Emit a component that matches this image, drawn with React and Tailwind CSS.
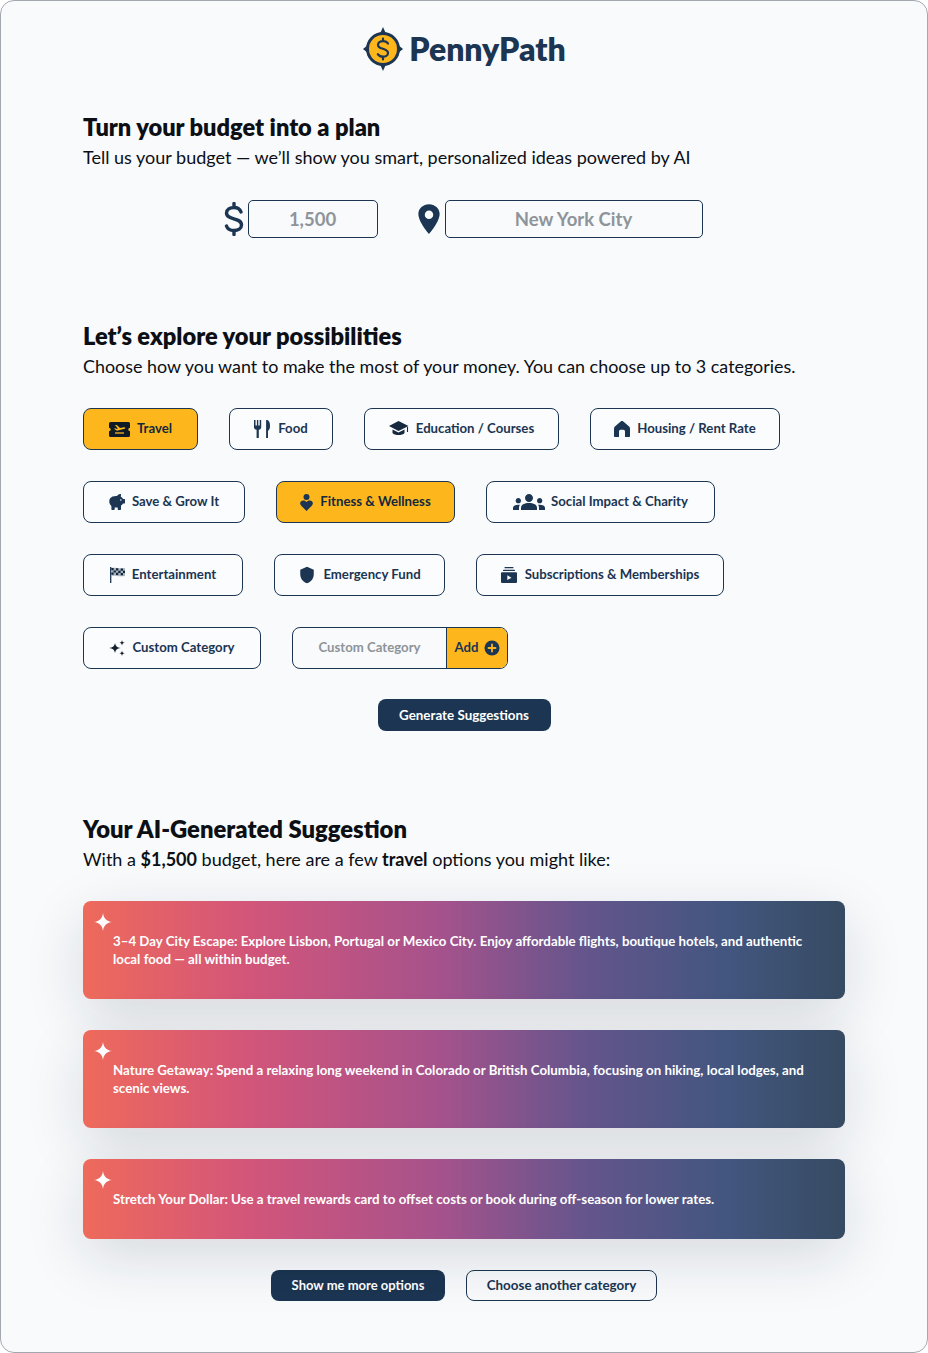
import React from "react";
import { MdGroups, MdShield } from "react-icons/md";
import { IoLocationSharp } from "react-icons/io5";

const NAVY = "#1b3552";

const Logo = () => (
  <svg width="42" height="44" viewBox="0 0 42 44">
    <path d="M21 0 L25 9 L41 22 L25 35 L21 44 L17 35 L1 22 L17 9 Z" fill={NAVY} />
    <circle cx="21" cy="22" r="17" fill={NAVY} />
    <circle cx="21" cy="22" r="14" fill="#fdb71c" />
    <path d="M26 16.500c-1-1.600-2.800-2.400-5-2.400-2.800 0-5 1.500-5 3.800 0 5 10 2.800 10 8 0 2.300-2.200 3.800-5 3.800-2.300 0-4.200-.9-5.200-2.600M21 11.500v2.600M21 29.900v2.600" fill="none" stroke={NAVY} strokeWidth="2.200" strokeLinecap="round" />
  </svg>
);

const Ticket = () => (
  <svg width="21" height="15" viewBox="0 0 21 15">
    <path d="M1.500 0h18A1.500 1.500 0 0 1 21 1.500v4.300a1.700 1.700 0 0 0 0 3.400v4.300a1.500 1.500 0 0 1-1.500 1.500h-18A1.500 1.500 0 0 1 0 13.500V9.200a1.700 1.700 0 0 0 0-3.400V1.500A1.500 1.500 0 0 1 1.500 0Z" fill="#0e1a26" />
    <path d="M6 3 L7.800 3 L11 6 L15 5.200 C16.500 5 16.800 6.400 15.500 6.800 L8 8.800 L5 6.800 L6.300 6.300 L7.700 7 L8.800 6.600 Z" fill="#fdb71c" />
    <path d="M6 11h9" stroke="#fdb71c" strokeWidth="1.300" />
  </svg>
);

const Food = () => (
  <svg width="17" height="18" viewBox="0 0 17 18" fill={NAVY}>
    <path d="M0 0h1.500v5.500h1.400V0h1.400v5.500h1.400V0h1.500v7c0 1.600-1 2.500-2.400 2.800V18H2.600V9.800C1 9.500 0 8.600 0 7Z" />
    <path d="M12.500 0C15 0 16 2.500 16 6c0 2.500-.7 4-2 4.700V18h-1.900V0Z" />
  </svg>
);

const Cap = () => (
  <svg width="20" height="16" viewBox="0 0 20 16" fill="#16293f">
    <path d="M9.500 0 L19.500 5 L9.500 10 L0 5 Z" />
    <path d="M3.500 8.500 L9.500 11.500 L15.500 8.500 V12 C13.500 14.800 5.500 14.800 3.500 12 Z" />
    <path d="M18.500 6v5" stroke="#16293f" strokeWidth="1.100" />
  </svg>
);

const House = () => (
  <svg width="16" height="16" viewBox="0 0 16 16" fill={NAVY}>
    <path fillRule="evenodd" d="M8 0 C9 0 9.500 .6 10.500 1.500 L14.500 5 C15.500 5.800 16 6.700 16 8 V15 C16 15.600 15.600 16 15 16 H11 V10.500 C11 9.500 10.300 8.800 9.500 8.800 H6.500 C5.700 8.800 5 9.500 5 10.500 V16 H1 C.4 16 0 15.600 0 15 V8 C0 6.700 .5 5.800 1.500 5 L5.500 1.500 C6.500 .6 7 0 8 0 Z" />
  </svg>
);

const Piggy = () => (
  <svg width="16" height="16" viewBox="0 0 16 16" fill={NAVY}>
    <path d="M1 4.500 C2.500 2.500 5 1.800 8 2 C9 .5 10.500 0 12 0 L11.800 2.700 C13 3.400 13.700 4.200 14 5 H15.500 C15.800 5 16 5.200 16 5.500 V9 C16 9.300 15.800 9.500 15.500 9.500 H14 C13.500 10.500 12.800 11 12 11.600 V15 C12 15.500 11.700 16 11 16 H9.500 C9 16 8.700 15.500 8.700 15 V13.500 H5.700 V15 C5.700 15.500 5.400 16 4.800 16 H3.200 C2.700 16 2.400 15.500 2.400 15 V12 C.4 10.500 -.4 7 1 4.500 Z" />
    <circle cx="11.800" cy="6" r=".8" fill="#fafcfe" />
  </svg>
);

const Heart = () => (
  <svg width="13" height="17" viewBox="0 0 13 17" fill={NAVY}>
    <circle cx="6.500" cy="3" r="3" />
    <path d="M6.500 17 L1 11.500 C-1 9 .8 6.500 3.300 6.500 C4.700 6.500 5.800 7.200 6.500 8 C7.200 7.200 8.300 6.500 9.700 6.500 C12.200 6.500 14 9 12 11.500 Z" />
  </svg>
);

const Flag = () => (
  <svg width="15" height="16" viewBox="0 0 15 16">
    <path d="M.7 0v16" stroke={NAVY} strokeWidth="1.300" />
    <path d="M1.300 1 C5 .2 9 2 15 1 V9 C9 10 5 8.200 1.300 9 Z" fill="#a9b4c0" />
    <path d="M1.300 1h2.300v2.300H1.300ZM6 1.300h2.300v2.300H6ZM10.700 1.500H13v2.200h-2.300ZM3.600 3.400h2.300v2.200H3.600ZM8.300 3.700h2.300v2.200H8.300ZM13 3.700h2v2.200h-2ZM1.300 5.600h2.300v2.200H1.300ZM6 5.800h2.300V8H6ZM10.700 6h2.300v2.200h-2.300Z" fill="#13263a" />
  </svg>
);

const Subs = () => (
  <svg width="16" height="16" viewBox="0 0 16 16" fill={NAVY}>
    <rect x="3.500" y="0" width="9" height="1.300" rx=".5" />
    <rect x="2" y="2.700" width="12" height="1.300" rx=".5" />
    <path fillRule="evenodd" d="M1 5.300h14a1 1 0 0 1 1 1V15a1 1 0 0 1-1 1H1a1 1 0 0 1-1-1V6.300a1 1 0 0 1 1-1Z M6.300 8.300v4.800l4.200-2.400Z" />
  </svg>
);

const Stars = () => (
  <svg width="16" height="16" viewBox="0 0 16 16" fill="#16202d">
    <path d="M6 3 C6.500 6 8 7.500 11.500 8 C8 8.500 6.500 10 6 13 C5.500 10 4 8.500 0 8 C4 7.500 5.500 6 6 3 Z" />
    <path d="M13 0 C13.200 1.700 14 2.600 16 2.800 C14 3 13.200 3.900 13 5.600 C12.800 3.900 12 3 10.200 2.800 C12 2.600 12.800 1.700 13 0 Z" />
    <path d="M13 10.400 C13.200 12.100 14 13 16 13.200 C14 13.400 13.200 14.300 13 16 C12.800 14.300 12 13.400 10.200 13.200 C12 13 12.800 12.100 13 10.400 Z" />
  </svg>
);

const PlusCircle = () => (
  <svg width="16" height="16" viewBox="0 0 16 16">
    <circle cx="8" cy="8" r="7.500" fill={NAVY} />
    <path d="M8 4.500v7M4.500 8h7" stroke="#fdb71c" strokeWidth="1.800" strokeLinecap="round" />
  </svg>
);

const Sparkle = () => (
  <svg width="18" height="18" viewBox="0 0 18 18" fill="#fff">
    <path d="M9 0 C9.700 5.500 12.500 8.300 18 9 C12.500 9.700 9.700 12.500 9 18 C8.300 12.500 5.500 9.700 0 9 C5.500 8.300 8.300 5.500 9 0 Z" />
  </svg>
);

const Chip = ({ w, icon, active, children, gap = "gap-[7px]" }) => (
  <button
    className={`${w} h-[42px] flex items-center justify-center ${gap} rounded-lg border-[1.5px] border-[#1b3552] text-[13.200px] font-bold ${active ? "bg-[#fdb71c] text-[#14283e]" : "bg-[#fafcfe] text-[#1b3552]"}`}
  >
    {icon}
    <span>{children}</span>
  </button>
);

const Suggestion = ({ h, children }) => (
  <div className={`${h} relative rounded-lg bg-[linear-gradient(90deg,#ee6a5b_0%,#d2557a_22%,#a5528c_47%,#64558c_66%,#435680_84%,#364b62_100%)] pl-[30px] pr-[40px] flex items-center text-[13.300px] leading-[18px] font-bold text-white shadow-[0_18px_60px_rgba(20,30,45,0.14)]`}>
    <span className="absolute left-[11px] top-[12px]"><Sparkle /></span>
    <p>{children}</p>
  </div>
);

export default function App() {
  return (
    <div className="w-[928px] h-[1353px] bg-white font-['Lato','Noto_Sans',sans-serif]">
      <div className="w-full h-full rounded-[14px] border border-[#a3a8b0] bg-[#f8fafc] px-[82px] overflow-hidden">
        <header className="flex justify-center items-center gap-[5px] pt-[25px]">
          <Logo />
          <span className="text-[32px] leading-[46px] font-extrabold text-[#1b3552]">PennyPath</span>
        </header>

        <h1 className="mt-[39px] text-[23.600px] leading-[32px] font-extrabold text-[#0c0f14]">Turn your budget into a plan</h1>
        <p className="mt-[1px] text-[18px] leading-[26px] text-[#0c0f14]">Tell us your budget — we’ll show you smart, personalized ideas powered by AI</p>

        <div className="mt-[30px] flex justify-center items-center pr-[2px]">
          <svg width="20" height="34" viewBox="0 0 20 34" className="mr-[4px]">
            <path d="M17 10c-1-3-3.800-4.500-7-4.500-4 0-7.500 2-7.500 5.500 0 7.500 15 4 15 12 0 3.500-3.500 5.500-7.500 5.500-3.500 0-6.500-1.500-7.500-4.500M10 1.500v4M10 28.500v4" fill="none" stroke={NAVY} strokeWidth="3.400" strokeLinecap="round" />
          </svg>
          <div className="w-[130px] h-[38px] rounded-[5px] border-[1.5px] border-[#1b3552] flex items-center justify-center pt-[1px] text-[18.500px] font-bold text-[#8e9499]">1,500</div>
          <IoLocationSharp className="ml-[34px] -mr-[1px] text-[#1b3552]" size={34} />
          <div className="w-[258px] h-[38px] rounded-[5px] border-[1.5px] border-[#1b3552] flex items-center justify-center pt-[1px] text-[18.500px] font-bold text-[#8e9499]">New York City</div>
        </div>

        <h2 className="mt-[82px] text-[23.600px] leading-[32px] font-extrabold text-[#0c0f14]">Let’s explore your possibilities</h2>
        <p className="mt-[1px] text-[17.900px] leading-[26px] text-[#0c0f14]">Choose how you want to make the most of your money. You can choose up to 3 categories.</p>

        <div className="mt-[29px] flex flex-col gap-[31px]">
          <div className="flex gap-[31px]">
            <Chip w="w-[115px]" active icon={<Ticket />}>Travel</Chip>
            <Chip w="w-[104px]" icon={<Food />}>Food</Chip>
            <Chip w="w-[195px]" icon={<Cap />}>Education / Courses</Chip>
            <Chip w="w-[190px]" icon={<House />}>Housing / Rent Rate</Chip>
          </div>
          <div className="flex gap-[31px]">
            <Chip w="w-[162px]" icon={<Piggy />}>Save &amp; Grow It</Chip>
            <Chip w="w-[179px]" active icon={<Heart />}>Fitness &amp; Wellness</Chip>
            <Chip w="w-[229px]" icon={<MdGroups size={32} color={NAVY} />} gap="gap-[6px]">Social Impact &amp; Charity</Chip>
          </div>
          <div className="flex gap-[31px]">
            <Chip w="w-[160px]" icon={<Flag />}>Entertainment</Chip>
            <Chip w="w-[171px]" icon={<MdShield size={18} color={NAVY} />}>Emergency Fund</Chip>
            <Chip w="w-[248px]" icon={<Subs />} gap="gap-[8px]">Subscriptions &amp; Memberships</Chip>
          </div>
          <div className="flex gap-[31px]">
            <Chip w="w-[178px]" icon={<Stars />}>Custom Category</Chip>
            <div className="w-[216px] h-[42px] flex rounded-lg border-[1.5px] border-[#1b3552] overflow-hidden text-[13.200px] font-bold">
              <div className="w-[153px] flex items-center justify-center text-[#8e9499]">Custom Category</div>
              <div className="flex-1 flex items-center justify-center gap-[5px] bg-[#fdb71c] border-l border-[#1b3552] text-[#1b3552]">Add <PlusCircle /></div>
            </div>
          </div>
        </div>

        <div className="mt-[30px] flex justify-center">
          <button className="w-[173px] h-[32px] rounded-lg bg-[#1b3552] text-white text-[13.400px] font-bold">Generate Suggestions</button>
        </div>

        <h2 className="mt-[82px] text-[23.800px] leading-[32px] font-extrabold text-[#0c0f14]">Your AI-Generated Suggestion</h2>
        <p className="mt-[1px] text-[18px] leading-[26px] text-[#0c0f14]">With a <b>$1,500</b> budget, here are a few <b>travel</b> options you might like:</p>

        <div className="mt-[29px] flex flex-col gap-[31px]">
          <Suggestion h="h-[98px]">3–4 Day City Escape: Explore Lisbon, Portugal or Mexico City. Enjoy affordable flights, boutique hotels, and authentic local food — all within budget.</Suggestion>
          <Suggestion h="h-[98px]">Nature Getaway: Spend a relaxing long weekend in Colorado or British Columbia, focusing on hiking, local lodges, and scenic views.</Suggestion>
          <Suggestion h="h-[80px]">Stretch Your Dollar: Use a travel rewards card to offset costs or book during off-season for lower rates.</Suggestion>
        </div>

        <div className="mt-[31px] flex justify-center gap-[21px]">
          <button className="w-[174px] h-[31px] rounded-lg bg-[#1b3552] text-white text-[13px] font-bold">Show me more options</button>
          <button className="w-[191px] h-[31px] rounded-lg border-[1.5px] border-[#1b3552] text-[#1b3552] text-[13.400px] font-bold">Choose another category</button>
        </div>
      </div>
    </div>
  );
}
